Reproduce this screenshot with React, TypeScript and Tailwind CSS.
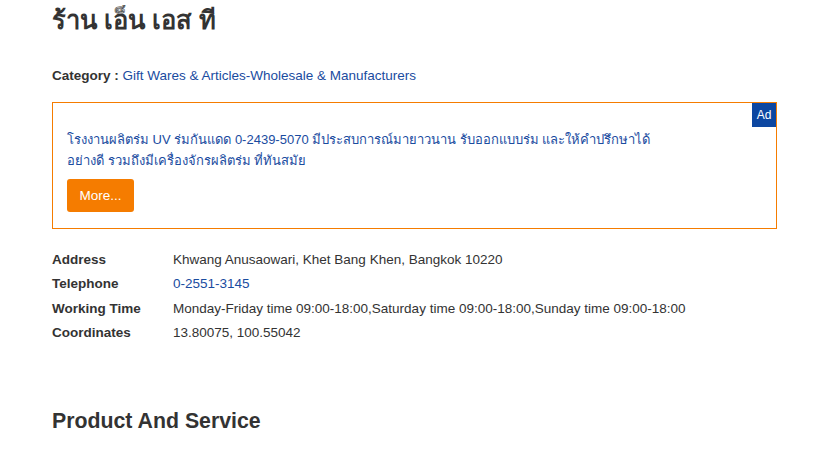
import React from 'react';

const info = [
  { label: 'Address', value: 'Khwang Anusaowari, Khet Bang Khen, Bangkok 10220' },
  { label: 'Telephone', value: '0-2551-3145', link: true },
  { label: 'Working Time', value: 'Monday-Friday time 09:00-18:00,Saturday time 09:00-18:00,Sunday time 09:00-18:00' },
  { label: 'Coordinates', value: '13.80075, 100.55042' },
];

export default function App() {
  return (
    <div className="min-h-screen bg-white text-[#333] font-['Liberation_Sans',Arial,sans-serif]">
      <div className="w-[725px] ml-[52px] pt-[4px]">
        {/* Shop name */}
        <h1 className="text-[25.5px] font-bold leading-[32px] text-[#333]">ร้าน เอ็น เอส ที</h1>

        <p className="mt-[31px] text-[13.5px] leading-[18px]">
          <span className="font-bold">Category : </span>
          <a href="#" className="text-[#1a4c9f]">Gift Wares &amp; Articles-Wholesale &amp; Manufacturers</a>
        </p>

        {/* Ad box */}
        <div className="relative mt-[17px] h-[127px] border border-[#f57c00] px-[14px] pt-[26px]">
          <span className="absolute right-0 top-0 bg-[#0d47a1] text-white text-[12px] leading-[24px] w-[24px] text-center">Ad</span>
          <p className="text-[13px] leading-[21px] text-[#1a4c9f] w-[590px]">
            โรงงานผลิตร่ม UV ร่มกันแดด 0-2439-5070 มีประสบการณ์มายาวนาน รับออกแบบร่ม และให้คำปรึกษาได้อย่างดี รวมถึงมีเครื่องจักรผลิตร่ม ที่ทันสมัย
          </p>
          <button className="mt-[8px] bg-[#f57c00] text-white text-[13.5px] leading-[33px] w-[67px] text-center rounded-[3px]">More...</button>
        </div>

        {/* Details */}
        <div className="mt-[19px] flex flex-col">
          {info.map((row) => (
            <div key={row.label} className="flex text-[13.5px] leading-[24.4px]">
              <span className="w-[121px] font-bold">{row.label}</span>
              <span className={row.link ? 'text-[#1a4c9f]' : ''}>{row.value}</span>
            </div>
          ))}
        </div>

        <h2 className="mt-[61px] text-[21.3px] font-bold leading-[28px]">Product And Service</h2>
      </div>
    </div>
  );
}
